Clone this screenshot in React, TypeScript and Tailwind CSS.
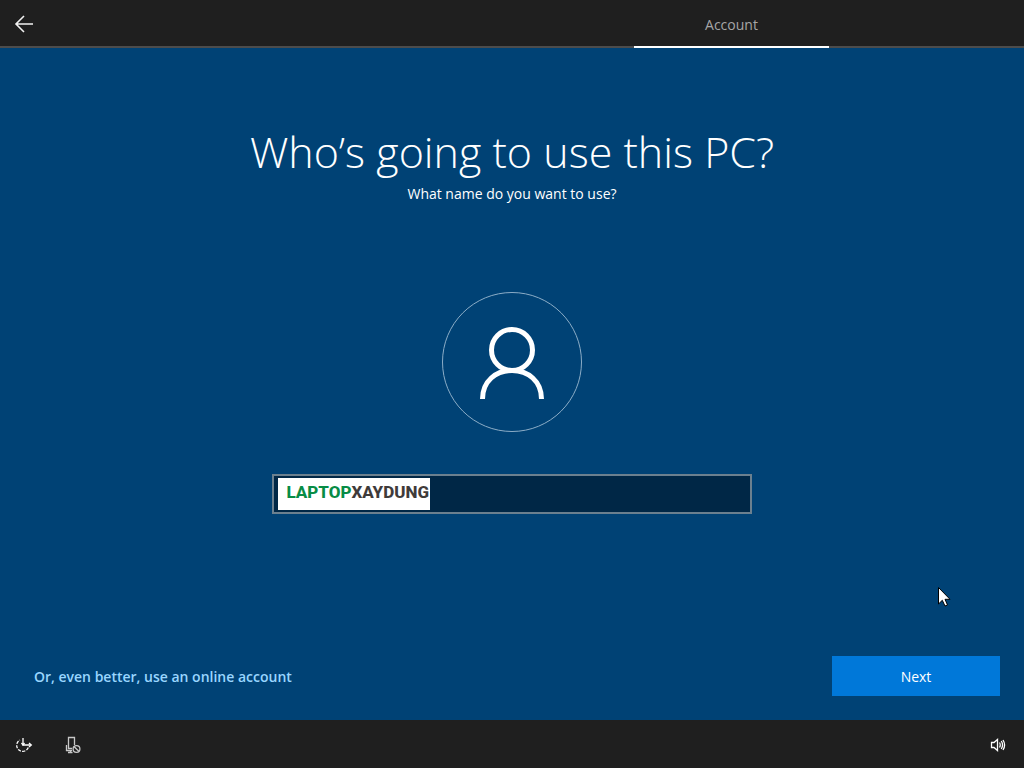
import React, { useState } from 'react';

const BackIcon = () => (
  <svg width="20" height="18" viewBox="0 0 20 18" fill="none" stroke="#f2f2f2" strokeWidth="1.6">
    <path d="M10 1 L2 9 L10 17 M2 9 H19" />
  </svg>
);

const UserIcon = () => (
  <svg width="72" height="76" viewBox="0 0 72 76" fill="none" stroke="#fff" strokeWidth="5">
    <circle cx="36" cy="24" r="20.5" />
    <path d="M6.5 73 C6.5 55 20 44.5 36 44.5 C52 44.5 65.5 55 65.5 73" />
  </svg>
);

const EaseOfAccessIcon = () => (
  <svg width="18" height="16" viewBox="0 0 18 16" fill="none" stroke="#fff" strokeWidth="1.3">
    <path d="M13.3 10.5 A6 6 0 1 1 5 3" strokeDasharray="3.2 1.3" />
    <path d="M8 1 V8 H16" />
    <path d="M6.5 6 L8 8 L9.5 6 M14 6 L16.3 8 L14 10" />
  </svg>
);

const MicOffIcon = () => (
  <svg width="16" height="18" viewBox="0 0 16 18" fill="none" stroke="#c8c8c8" strokeWidth="1.3">
    <path d="M9.5 9 V1.500 H3.5 V12.5 H7" />
    <path d="M1.5 9 V14.5 H7 M5.5 14.5 V16.5 M3 16.5 H7.5" />
    <circle cx="11.5" cy="13" r="3.4" />
    <path d="M9.200 10.700 L13.800 15.300" />
  </svg>
);

const VolumeIcon = () => (
  <svg width="16" height="14" viewBox="0 0 16 14" fill="none" stroke="#fff" strokeWidth="1.3">
    <path d="M1.5 4.5 H4 L7.5 1.5 V12.5 L4 9.5 H1.5 Z" />
    <path d="M9.5 4.5 Q11 7 9.5 9.5 M11.3 3 Q13.800 7 11.3 11 M13 2 Q16.2 7 13 12" />
  </svg>
);

const Cursor = () => (
  <svg
    className="pointer-events-none fixed left-[937px] top-[586px]"
    width="16"
    height="22"
    viewBox="0 0 16 22"
  >
    <path
      d="M1.5 1.5 V18 L5.3 14.3 L8 20 L10.500 19 L8 13.300 H13 Z"
      fill="#fff"
      stroke="#000"
      strokeWidth="1"
    />
  </svg>
);

const App: React.FC = () => {
  const [name, setName] = useState('');

  return (
    <div className="flex min-h-screen flex-col bg-[#004275] font-['Open_Sans','Noto_Sans',sans-serif] text-white">
      {/* Top bar */}
      <header className="flex h-12 items-stretch justify-between border-b-2 border-[#4c4c4c] bg-[#1f1f1f]">
        <button aria-label="Back" className="flex w-12 items-center justify-center pt-0.5">
          <BackIcon />
        </button>
        <nav className="-mb-0.5 mr-[195px] flex">
          <a
            href="#account"
            className="flex w-[195px] items-center justify-center border-b-2 border-white pt-1 text-sm text-[#a6a6a6]"
          >
            Account
          </a>
        </nav>
      </header>

      <main className="flex flex-1 flex-col items-center px-6 pb-6 pt-[76px]">
        <h1 className="text-center text-[43px] font-light leading-[56px]">Who’s going to use this PC?</h1>
        <p className="mt-0.5 text-center text-sm leading-6">What name do you want to use?</p>

        <div className="mt-[86px] flex size-[140px] items-center justify-center rounded-full border border-[#8cadc7] pt-1">
          <UserIcon />
        </div>

        <div className="mt-[42px] flex h-10 w-full max-w-[480px] border-2 border-[#6b808f] bg-[#002746] px-1 py-0.5">
          <label
            htmlFor="user-name"
            className="flex w-[152px] items-center justify-end bg-white pb-0.5 pr-px font-['Roboto',sans-serif] text-[17px] font-extrabold text-[#3f3b3a]"
          >
            <span className="text-[#078c45]">LAPTOP</span>XAYDUNG
          </label>
          <input
            id="user-name"
            type="text"
            value={name}
            onChange={(e) => setName(e.target.value)}
            className="min-w-0 flex-1 bg-transparent px-2 text-sm outline-none"
          />
        </div>

        {/* Actions */}
        <div className="mt-auto flex w-full items-center justify-between pl-2.5">
          <a href="#online" className="pt-0.5 text-sm font-semibold text-[#99d6ff]">
            Or, even better, use an online account
          </a>
          <button className="h-10 w-[168px] bg-[#0078d9] pt-0.5 text-sm">Next</button>
        </div>
      </main>

      {/* Bottom bar */}
      <footer className="flex h-12 items-center justify-between bg-[#1f1f1f] pl-[15px] pr-[18px] pt-0.5">
        <div className="flex items-center gap-8">
          <button aria-label="Ease of access">
            <EaseOfAccessIcon />
          </button>
          <button aria-label="Microphone">
            <MicOffIcon />
          </button>
        </div>
        <button aria-label="Volume">
          <VolumeIcon />
        </button>
      </footer>

      <Cursor />
    </div>
  );
};

export default App;
